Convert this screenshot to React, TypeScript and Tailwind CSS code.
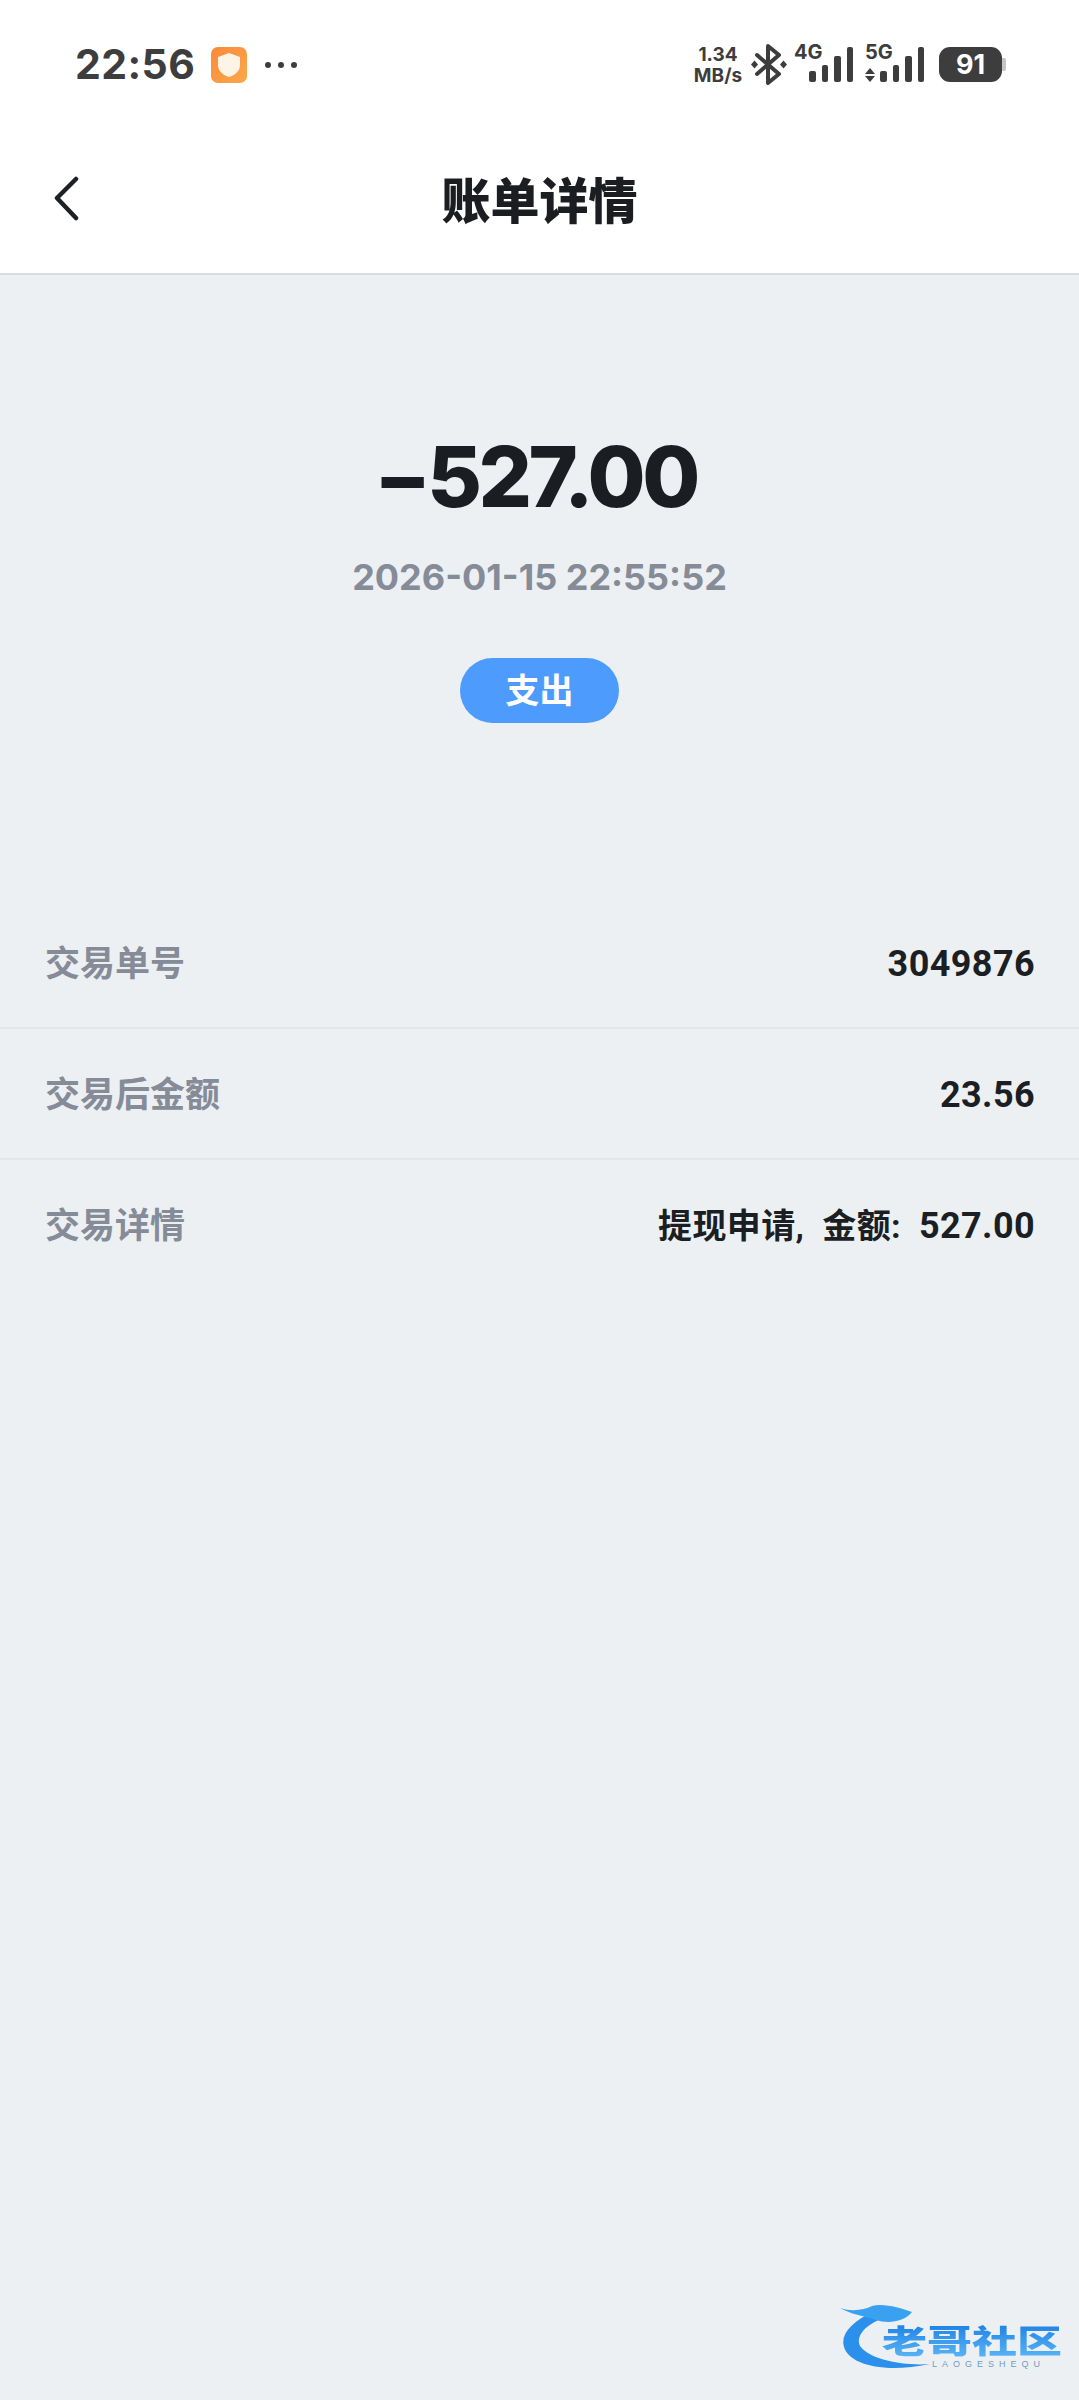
import type { ReactNode } from "react";

const cjk = "font-['Inter','Noto_Sans_CJK_SC',sans-serif]";

function Bars() {
  return (
    <div className="flex items-end gap-[6px]">
      {[11, 17, 26, 35].map((h, i) => (
        <div key={i} className="w-[6.5px] rounded-[2px] bg-[#3d3d3d]" style={{ height: h }} />
      ))}
    </div>
  );
}

function Bluetooth() {
  return (
    <svg width="38" height="41" viewBox="0 0 38 41" fill="none">
      <path d="M7 11 L29 30 L18 39 V2 L29 11 L7 30" stroke="#3d3d3d" strokeWidth="4" strokeLinejoin="round" strokeLinecap="round" />
      <path d="M4.5 16.5 L8 20.5 L4.5 24.5 L1 20.5 Z M33.5 16.5 L37 20.5 L33.5 24.5 L30 20.5 Z" fill="#3d3d3d" />
    </svg>
  );
}

function StatusBar() {
  return (
    <div className="flex h-[131px] items-center justify-between pr-[73px] pb-[2px] pl-[75px] text-[#3d3d3d]">
      <div className="flex items-center">
        <span className="w-[120px] text-[41px] leading-none font-bold tracking-[0.4px]">22:56</span>
        <div className="ml-[16px] flex h-[36px] w-[36px] items-center justify-center rounded-[7px] bg-gradient-to-br from-[#f98a3a] to-[#fba84b]">
          <svg width="24" height="26" viewBox="0 0 24 26">
            <path d="M12 1 L23 5 V13 C23 19 18 23 12 25 C6 23 1 19 1 13 V5 Z" fill="#fdf3e6" />
          </svg>
        </div>
        <div className="ml-[18px] flex gap-[7px]">
          <div className="h-[6px] w-[6px] rounded-full bg-[#3d3d3d]" />
          <div className="h-[6px] w-[6px] rounded-full bg-[#3d3d3d]" />
          <div className="h-[6px] w-[6px] rounded-full bg-[#3d3d3d]" />
        </div>
      </div>
      <div className="flex items-center">
        <div className="flex w-[46px] flex-col items-center text-[19px] leading-[21px] font-bold whitespace-nowrap">
          <span>1.34</span>
          <span>MB/s</span>
        </div>
        <div className="ml-[9px] w-[38px]">
          <Bluetooth />
        </div>
        <div className="relative ml-[6px] h-[41px] w-[59px]">
          <span className="absolute top-[-2px] left-0 text-[20px] leading-[20px] font-bold">4G</span>
          <div className="absolute right-0 bottom-[3px]">
            <Bars />
          </div>
        </div>
        <div className="relative ml-[12px] h-[41px] w-[59px]">
          <span className="absolute top-[-2px] left-0 text-[20px] leading-[20px] font-bold">5G</span>
          <div className="absolute bottom-[3px] left-0 flex flex-col gap-[2px]">
            <div className="h-0 w-0 border-x-[5px] border-b-[6px] border-x-transparent border-b-[#3d3d3d]" />
            <div className="h-0 w-0 border-x-[5px] border-t-[6px] border-x-transparent border-t-[#3d3d3d]" />
          </div>
          <div className="absolute right-0 bottom-[3px]">
            <Bars />
          </div>
        </div>
        <div className="ml-[15px] flex items-center">
          <div className="flex h-[35px] w-[63px] items-center justify-center rounded-[11px] bg-[#3d3d3d] text-[27px] leading-none font-bold text-white">
            91
          </div>
          <div className="h-[13px] w-[4px] rounded-r-[2px] bg-[#c4c4c4]" />
        </div>
      </div>
    </div>
  );
}

function Row({ label, children, last }: { label: string; children: ReactNode; last?: boolean }) {
  return (
    <div className={`flex h-[131px] items-center justify-between pr-[44px] pl-[45px] ${last ? "" : "border-b-[2px] border-[#e3e7ea] pt-[2px]"}`}>
      <span className="text-[35px] font-bold text-[#868b98]">{label}</span>
      <span className="font-['Roboto','Noto_Sans_CJK_SC',sans-serif] text-[36px] font-bold tracking-[0.4px] text-[#1b1f23]">{children}</span>
    </div>
  );
}

export default function App() {
  return (
    <div className={`flex h-[2400px] w-[1079px] flex-col overflow-hidden bg-[#ecf0f3] ${cjk}`}>
      <div className="border-b-[2px] border-[#d8dce0] bg-white">
        <StatusBar />
        <div className="relative flex h-[142px] items-center justify-center pb-[1px]">
          <svg className="absolute top-[44px] left-[52px]" width="28" height="46" viewBox="0 0 28 46" fill="none">
            <path d="M24 4 L5 23 L24 43" stroke="#1d2024" strokeWidth="4.5" strokeLinecap="round" strokeLinejoin="round" />
          </svg>
          <h1 className="text-[49px] leading-none font-black text-[#1b1d21]">账单详情</h1>
        </div>
      </div>
      <div className="flex flex-col items-center pt-[152px]">
        <div className="text-[84px] leading-[100px] font-extrabold tracking-[-3.5px] text-[#1a1e22]">
          <span className="mr-[9px] inline-block scale-x-[1.5]">-</span>527.00
        </div>
        <div className="mt-[28px] text-[36px] leading-[44px] font-bold text-[#868b98]">2026-01-15 22:55:52</div>
        <div className="mt-[59px] flex h-[65px] w-[159px] items-center justify-center rounded-full bg-[#4d9bfd] text-[34px] font-bold text-white">
          支出
        </div>
      </div>
      <div className="mt-[175px] flex flex-col">
        <Row label="交易单号">3049876</Row>
        <Row label="交易后金额">23.56</Row>
        <Row label="交易详情" last>
          <span className="text-[34px] [word-spacing:9px]">提现申请, 金额: </span>527.00
        </Row>
      </div>
      <div className="mt-auto flex justify-end pr-[16px] pb-[28px]">
        <div className="relative h-[70px] w-[225px]">
          <svg className="absolute top-0 left-0" width="130" height="70" viewBox="0 0 130 70" fill="none">
            <path d="M36 9 C14 20 2 32 6 45 C11 62 44 72 92 62 C66 64 32 58 22 44 C17 34 28 22 46 16 Z" fill="#2a90ec" />
            <path d="M2 6 C14 10 26 8 34 4 C46 1 62 6 74 10 C66 20 50 22 38 18 C26 14 12 12 2 6 Z" fill="#3aa0f0" />
          </svg>
          <span className="absolute top-[23px] left-[44px] origin-top-left scale-y-[0.72] bg-gradient-to-b from-[#1f84e6] to-[#58b4f5] bg-clip-text text-[45px] leading-none font-black whitespace-nowrap text-transparent">
            老哥社区
          </span>
          <span className="absolute top-[58px] left-[94px] font-['Liberation_Sans',sans-serif] text-[9px] leading-none tracking-[5px] text-[#6f9cc2]">
            LAOGESHEQU
          </span>
        </div>
      </div>
    </div>
  );
}
